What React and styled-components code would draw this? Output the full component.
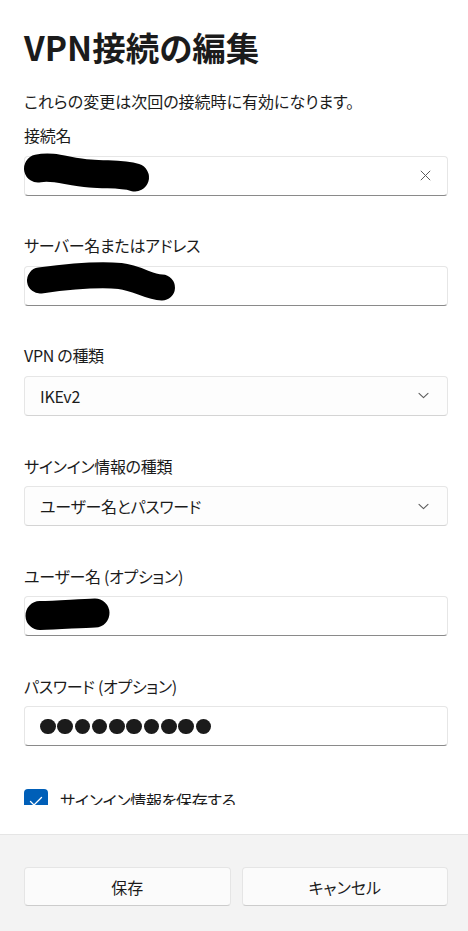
import React from "react";
import styled, { createGlobalStyle } from "styled-components";

const Global = createGlobalStyle`
  html, body { margin: 0; padding: 0; background: #ffffff; }
  body {
    font-family: "Noto Sans CJK JP", "Noto Sans", sans-serif;
    color: #1b1b1b;
    font-feature-settings: "palt";
    -webkit-font-smoothing: antialiased;
  }
`;

const Dialog = styled.div`
  width: 468px;
  height: 931px;
  display: flex;
  flex-direction: column;
  background: #ffffff;
`;

const Scroll = styled.div`
  flex: 1;
  min-height: 0;
  overflow: hidden;
  margin-bottom: 29px;
  display: flex;
  flex-direction: column;
  padding: 0 20px 0 24px;
`;

const Title = styled.h1`
  margin: 27px 0 0;
  font-size: 33.5px;
  line-height: 40px;
  font-weight: 700;
  letter-spacing: 0;
`;

const Subtitle = styled.p`
  margin: 24px 0 0;
  font-size: 16px;
  line-height: 20px;
`;

const Fields = styled.div`
  margin-top: 14px;
  display: flex;
  flex-direction: column;
  gap: 39.7px;
`;

const Field = styled.div`
  display: flex;
  flex-direction: column;
  gap: 10.5px;
`;

const Label = styled.div`
  font-size: 16px;
  line-height: 20px;
  letter-spacing: -0.3px;
`;

const Box = styled.div`
  position: relative;
  box-sizing: border-box;
  height: 40px;
  display: flex;
  align-items: center;
  padding: 0 15px;
  border: 1px solid #e6e6e6;
  border-bottom-color: ${(p) => (p.$select ? "#d4d4d4" : "#8a8a8a")};
  border-radius: 4px;
  background: ${(p) => (p.$select ? "#fdfdfd" : "#ffffff")};
  font-size: 16px;
`;

const Value = styled.span`
  flex: 1;
  line-height: 20px;
  letter-spacing: -0.3px;
`;

const Dots = styled.span`
  flex: 1;
  display: flex;
  gap: 1.8px;
`;

const Dot = styled.span`
  width: 15.5px;
  height: 15.5px;
  border-radius: 50%;
  background: #1b1b1b;
`;

const IconSlot = styled.span`
  display: flex;
  align-items: center;
  justify-content: center;
  margin-right: ${(p) => p.$mr || 0}px;
`;

const Redaction = styled.svg`
  position: absolute;
  left: -1px;
  top: -1px;
  overflow: visible;
  pointer-events: none;
`;

const CheckRow = styled.label`
  margin-top: 43px;
  display: flex;
  align-items: flex-start;
  gap: 12px;
  font-size: 16px;
  line-height: 24px;
`;

const CheckBox = styled.span`
  flex: none;
  width: 24px;
  height: 24px;
  border-radius: 4px;
  background: #005fb8;
  display: flex;
  align-items: center;
  justify-content: center;
`;

const CheckText = styled.span`
  margin-top: -1px;
  letter-spacing: -0.3px;
`;

const Footer = styled.div`
  flex: none;
  height: 97px;
  box-sizing: border-box;
  border-top: 1px solid #e5e5e5;
  background: #f3f3f3;
  padding: 32px 20px 0 24px;
  display: grid;
  grid-template-columns: 1fr 1fr;
  column-gap: 11px;
  align-items: start;
`;

const Button = styled.button`
  height: 39px;
  box-sizing: border-box;
  border: 1px solid #e5e5e5;
  border-bottom-color: #cccccc;
  border-radius: 4px;
  background: #fbfbfb;
  font-family: inherit;
  font-size: 16px;
  color: #1b1b1b;
  font-feature-settings: "palt";
  padding: 0;
`;

const Scribble = ({ d, w }) => (
  <Redaction width="200" height="42" viewBox="0 0 200 42">
    <path d={d} fill="none" stroke="#000" strokeWidth={w} strokeLinecap="round" strokeLinejoin="round" />
  </Redaction>
);

const CloseIcon = () => (
  <svg width="11" height="11" viewBox="0 0 11 11">
    <path d="M0.8 0.8 L10.2 10.2 M10.2 0.8 L0.8 10.2" stroke="#5c5c5c" strokeWidth="1" fill="none" />
  </svg>
);

const Chevron = () => (
  <svg width="11" height="7" viewBox="0 0 11 7">
    <path d="M1 1.3 L5.5 5.6 L10 1.3" stroke="#5c5c5c" strokeWidth="1.1" fill="none" strokeLinecap="round" strokeLinejoin="round" />
  </svg>
);

export default function App() {
  return (
    <>
      <Global />
      <Dialog>
        <Scroll>
          <Title>VPN接続の編集</Title>
          <Subtitle>これらの変更は次回の接続時に有効になります。</Subtitle>
          <Fields>
            <Field>
              <Label>接続名</Label>
              <Box>
                <Scribble d="M14 12.5 C 30 9, 44 16, 66 17.5 C 86 19, 98 17.5, 111 21.5" w={28} />
                <Value />
                <IconSlot $mr={1}>
                  <CloseIcon />
                </IconSlot>
              </Box>
            </Field>
            <Field>
              <Label>サーバー名またはアドレス</Label>
              <Box>
                <Scribble d="M16 14.5 C 45 10.5, 75 8, 96 10 C 115 12.5, 124 21, 138 21.5" w={26} />
                <Value />
              </Box>
            </Field>
            <Field>
              <Label>VPN の種類</Label>
              <Box $select>
                <Value>IKEv2</Value>
                <IconSlot $mr={3}>
                  <Chevron />
                </IconSlot>
              </Box>
            </Field>
            <Field>
              <Label>サインイン情報の種類</Label>
              <Box $select>
                <Value>ユーザー名とパスワード</Value>
                <IconSlot $mr={3}>
                  <Chevron />
                </IconSlot>
              </Box>
            </Field>
            <Field>
              <Label>ユーザー名 (オプション)</Label>
              <Box>
                <Scribble d="M16 19.5 C 35 19, 55 17.5, 71 17" w={29} />
                <Value />
              </Box>
            </Field>
            <Field>
              <Label>パスワード (オプション)</Label>
              <Box>
                <Dots aria-label="●●●●●●●●●●">
                  {Array.from({ length: 10 }).map((_, i) => (
                    <Dot key={i} />
                  ))}
                </Dots>
              </Box>
            </Field>
          </Fields>
          <CheckRow>
            <CheckBox>
              <svg width="24" height="24" viewBox="0 0 24 24">
                <path d="M6.5 12.5 L10 16 L17.5 8.5" stroke="#fff" strokeWidth="1.3" fill="none" strokeLinecap="round" strokeLinejoin="round" />
              </svg>
            </CheckBox>
            <CheckText>サインイン情報を保存する</CheckText>
          </CheckRow>
        </Scroll>
        <Footer>
          <Button>保存</Button>
          <Button>キャンセル</Button>
        </Footer>
      </Dialog>
    </>
  );
}
